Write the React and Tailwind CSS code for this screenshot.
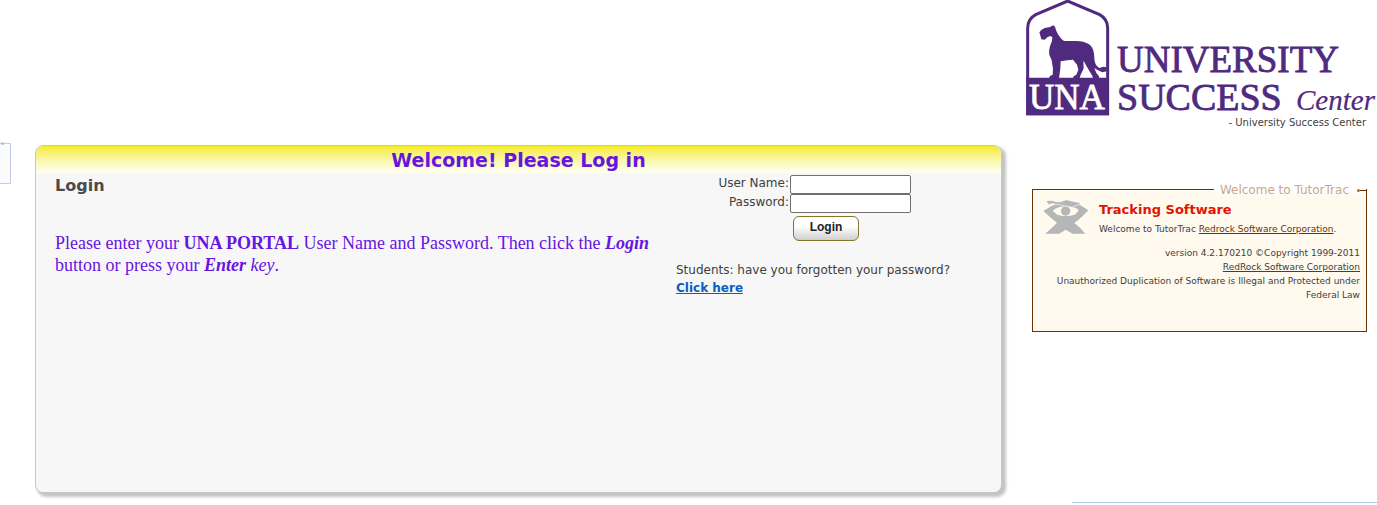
import React, { useState } from 'react';

function Logo() {
  return (
    <svg
      viewBox="0 0 351 120"
      className="block w-[351px] h-[120px]"
      role="img"
      aria-label="University Success Center"
    >
      <g transform="scale(0.3333) translate(-27 0)">
        <path
          d="M32 341V84c0-18 8-31 24-40L152 3l96 41c16 9 24 22 24 40v257z"
          fill="#fff"
          stroke="#4f2a7e"
          strokeWidth="9"
        />
        <path d="M28 233h248v113H28z" fill="#4f2a7e" />
        {/* mascot */}
        <path
          transform="translate(63 66)"
          d="M4 31L10 24L20 18L36 15L46 10L51 14L54 24C59 38 66 48 78 57H110C130 57 148 61 157 70C166 79 168 92 169 106C169 120 173 132 184 138L196 134L206 136V148L193 151L180 145L169 138L175 153L183 163V169H165L163 161L156 150L143 128L137 116C135 130 139 134 136 142L128 158L125 169H105L107 163L115 158L121 143L117 128L105 113L88 115L68 118L67 140L63 169H33L36 162L44 158L45 140L41 115L34 98C32 80 38 67 42 57L43 46L38 42L29 45L20 53L10 52L8 44Z"
          fill="#4f2a7e"
        />
      </g>
      <g fontFamily="'Liberation Serif', serif" fill="#4f2a7e" stroke="#4f2a7e" strokeWidth="0.8">
        <text x="3" y="109" fontSize="35" fill="#fff" stroke="#fff">UNA</text>
        <text x="91" y="72" fontSize="37">UNIVERSITY</text>
        <text x="91" y="110" fontSize="38">SUCCESS</text>
        <text x="270" y="110" fontSize="29" fontStyle="italic" strokeWidth="0.2">Center</text>
      </g>
    </svg>
  );
}

function TracIcon() {
  return (
    <svg viewBox="7 7 138 102" className="w-[46px] h-[34px] shrink-0" aria-hidden="true">
      <path
        d="M8 40L34 24L50 17L76 8L112 18L143 38L124 57L101 76L118 90L134 108H96L75 96L56 108H14L34 90L49 76L28 58Z"
        fill="#b5b6b8"
      />
      <path d="M36 39C48 29 60 26 75 26C91 26 103 29 115 38L102 52C90 57 60 57 49 51Z" fill="#fff9ee" />
      <path d="M49 51C60 56 90 56 102 51V60H49Z" fill="#b5b6b8" />
      <circle cx="75" cy="40" r="14" fill="#b5b6b8" />
      <path d="M50 20L78 8L120 17L94 28Z" fill="#b5b6b8" />
      <path d="M18 10L34 9L48 14L58 12L52 20L34 17L24 20Z" fill="#b5b6b8" />
      <path d="M32 22L52 20L94 29L122 18" fill="none" stroke="#fff9ee" strokeWidth="2" />
    </svg>
  );
}

function LoginForm() {
  const [user, setUser] = useState('');
  const [password, setPassword] = useState('');
  const field =
    'block w-[121px] h-[19px] rounded-xs border border-[#6f6f6f] bg-white px-1 text-xs outline-none';

  return (
    <form onSubmit={(e) => e.preventDefault()} className="w-[235px]">
      <div className="grid grid-cols-[1fr_121px] gap-x-px text-right text-xs leading-4">
        <label htmlFor="user">User Name:</label>
        <input id="user" type="text" className={field} value={user} onChange={(e) => setUser(e.target.value)} />
        <label htmlFor="password">Password:</label>
        <input
          id="password"
          type="password"
          className={field}
          value={password}
          onChange={(e) => setPassword(e.target.value)}
        />
      </div>
      <button
        type="submit"
        className="mt-[3px] ml-[117px] block h-[25px] w-[66px] rounded-md border border-[#83782a] bg-linear-to-b from-white from-40% to-[#cfcfcf] pb-1 font-['Liberation_Sans',sans-serif] text-xs leading-4 font-bold text-[#222]"
      >
        Login
      </button>
    </form>
  );
}

function WelcomePanel() {
  return (
    <main className="mt-[145px] ml-6 min-h-[348px] min-w-0 flex-1 self-start rounded-lg border border-[#c6c6cc] bg-[#f7f7f7] shadow-[3px_3px_3px_1px_#c4c4c4]">
      <h1 className="h-[27px] rounded-t-lg bg-linear-to-b from-[#f5eb0c] to-[#fffff4] text-center text-[19px] leading-7 font-bold text-[#6715e0]">
        Welcome! Please Log in
      </h1>
      <div className="flex justify-between pr-[47px] pl-[19px]">
        <section className="w-[604px]">
          <h2 className="pt-px text-base leading-6 font-bold text-[#4a4a4a]">Login</h2>
          <p className="mt-[34px] font-['Liberation_Serif',serif] text-lg leading-[22px] text-[#6715e0]">
            Please enter your <b>UNA PORTAL</b> User Name and Password. Then click the{' '}
            <b>
              <i>Login</i>
            </b>{' '}
            button or press your <b><i>Enter</i></b> <i>key</i>.
          </p>
        </section>
        <section className="w-[278px] shrink-0 pt-[2px]">
          <LoginForm />
          <p className="mt-5 text-xs leading-[18px] whitespace-nowrap">
            Students: have you forgotten your password?
            <br />
            <a href="#forgot" className="font-bold text-[#0860c4] underline">
              Click here
            </a>
          </p>
        </section>
      </div>
    </main>
  );
}

function TutorTracBox() {
  return (
    <section className="relative mt-[59px] mr-[10px] ml-[6px] min-h-[143px] border border-[#6b3206] bg-[#fff9ee] pt-2 pr-[6px] pl-[10px] text-[9px] leading-[14px]">
      <div className="absolute -top-2 right-0 flex h-4 items-center bg-linear-to-b from-white from-50% to-[#fff9ee] pl-[6px] text-xs text-[#c9a78c]">
        Welcome to TutorTrac
        <span className="ml-2 size-[3px] rounded-full bg-[#b46a1c]" />
        <span className="h-px w-[6px] bg-[#6b3206]" />
      </div>
      <div className="flex gap-[10px]">
        <div className="pt-[2px]">
          <TracIcon />
        </div>
        <div className="whitespace-nowrap">
          <h3 className="text-[13px] leading-6 font-bold text-[#e01500]">Tracking Software</h3>
          <p>
            Welcome to TutorTrac{' '}
            <a href="#redrock" className="text-[#6b3206] underline">
              Redrock Software Corporation
            </a>
            .
          </p>
        </div>
      </div>
      <p className="mt-[10px] text-right">
        version 4.2.170210 ©Copyright 1999-2011
        <br />
        <a href="#copyright" className="underline">
          RedRock Software Corporation
        </a>
        <br />
        Unauthorized Duplication of Software is Illegal and Protected under Federal Law
      </p>
    </section>
  );
}

export default function App() {
  return (
    <div className="flex bg-white font-['DejaVu_Sans',Verdana,sans-serif] text-[#404040]">
      <div className="relative mt-[143px] h-[41px] w-[11px] shrink-0 border-t border-r border-b border-[#c3cbe4] bg-[#fbfbfe]">
        <span className="absolute -top-[2px] left-px size-[3px] rounded-full bg-[#b3c0dc]" />
      </div>
      <WelcomePanel />
      <aside className="ml-6 w-[351px] shrink-0">
        <Logo />
        <p className="-mt-1 mr-[11px] text-right text-[10px] leading-[14px]">- University Success Center</p>
        <TutorTracBox />
        <hr className="mt-[170px] ml-[46px] border-[#b8c8e4]" />
      </aside>
    </div>
  );
}
